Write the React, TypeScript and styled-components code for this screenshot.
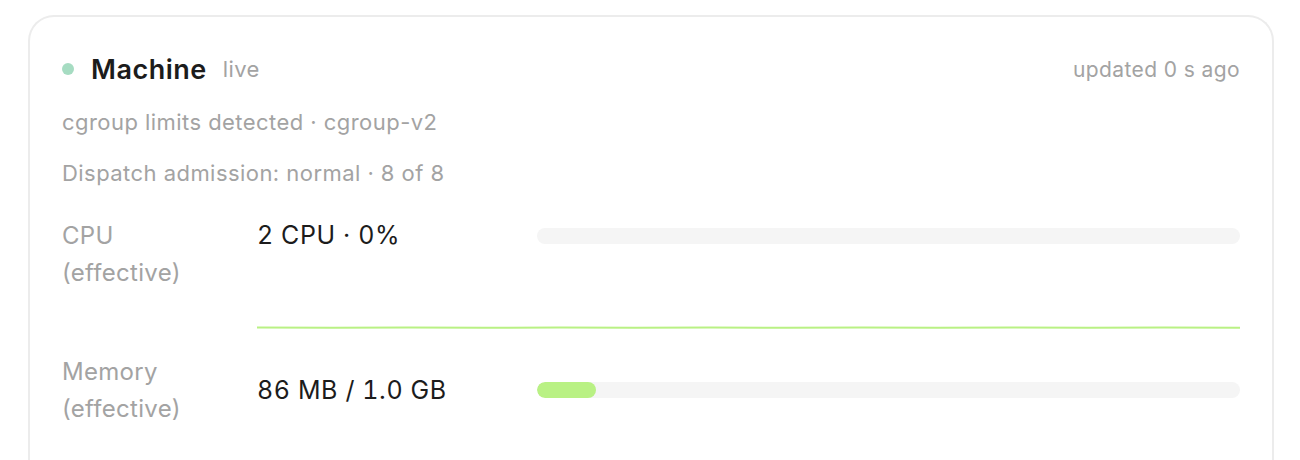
import React from "react";
import styled, { createGlobalStyle } from "styled-components";

const GlobalStyle = createGlobalStyle`
  html, body { margin: 0; padding: 0; background: #ffffff; }
  body { font-family: Inter, "Noto Sans", sans-serif; }
`;

const Page = styled.div`
  padding: 15px 26px 0 28px;
  height: 460px;
  box-sizing: border-box;
  overflow: hidden;
`;

const Card = styled.section`
  border: 2px solid #ececec;
  border-bottom: none;
  border-radius: 26px 26px 0 0;
  padding: 34px 32px 40px 32px;
  min-height: 500px;
  box-sizing: border-box;
  display: flex;
  flex-direction: column;
`;

const Header = styled.header`
  display: flex;
  align-items: center;
  justify-content: space-between;
  height: 36px;
`;

const TitleGroup = styled.div`
  display: flex;
  align-items: center;
`;

const Dot = styled.span`
  width: 12px;
  height: 12px;
  border-radius: 50%;
  background: #a6dcc2;
  margin-right: 17px;
`;

const Title = styled.h2`
  margin: 0;
  font-size: 27px;
  font-weight: 600;
  color: #1c1c1c;
  letter-spacing: 0.5px;
`;

const Muted = styled.span<{ $size?: number }>`
  font-size: ${(p) => p.$size ?? 21}px;
  letter-spacing: 0.4px;
  color: #a3a3a3;
`;

const Live = styled(Muted)`
  margin-left: 16px;
`;

const Meta = styled.p`
  margin: 0;
  font-size: 22px;
  letter-spacing: 0.45px;
  line-height: 51px;
  color: #a3a3a3;
`;

const MetaBlock = styled.div`
  margin-top: 10px;
  display: flex;
  flex-direction: column;
`;

const Metrics = styled.div`
  display: grid;
  grid-template-columns: 195px 280px 1fr;
  margin-top: 18px;
`;

const Label = styled.div`
  font-size: 24px;
  letter-spacing: 0.3px;
  line-height: 37px;
  color: #a3a3a3;
`;

const Value = styled.div<{ $center?: boolean }>`
  font-size: 25px;
  letter-spacing: 0.6px;
  font-variant-numeric: tabular-nums;
  line-height: 37px;
  color: #1c1c1c;
  align-self: ${(p) => (p.$center ? "center" : "start")};
`;

const BarCell = styled.div<{ $center?: boolean }>`
  align-self: ${(p) => (p.$center ? "center" : "start")};
  padding-top: ${(p) => (p.$center ? "0" : "11px")};
`;

const Track = styled.div`
  height: 16px;
  border-radius: 8px;
  background: #f5f5f5;
  overflow: hidden;
`;

const Fill = styled.div`
  height: 100%;
  border-radius: 8px;
  background: #b9f184;
`;

const MetricRow = styled.div`
  display: contents;
`;

const ChartCell = styled.div`
  grid-column: 2 / 4;
  margin-top: -23px;
  height: 61px;
  margin-bottom: 24px;
`;

const Spark = styled.svg`
  display: block;
  width: 100%;
  height: 100%;
`;

const points = Array.from({ length: 14 }, (_, i) => i);

export default function App() {
  const memPct = (86 / 1024) * 100;
  const w = 983;
  const h = 61;
  const poly = points
    .map((i) => `${(i / (points.length - 1)) * w},${h - 1.2 - (i % 2 === 0 ? 0.3 : 0)}`)
    .join(" ");
  return (
    <>
      <GlobalStyle />
      <Page>
        <Card>
          <Header>
            <TitleGroup>
              <Dot />
              <Title>Machine</Title>
              <Live $size={22}>live</Live>
            </TitleGroup>
            <Muted>updated 0 s ago</Muted>
          </Header>
          <MetaBlock>
            <Meta>cgroup limits detected · cgroup-v2</Meta>
            <Meta>Dispatch admission: normal · 8 of 8</Meta>
          </MetaBlock>
          <Metrics>
            <MetricRow>
              <Label>
                CPU
                <br />
                (effective)
              </Label>
              <Value>2 CPU · 0%</Value>
              <BarCell>
                <Track>
                  <Fill style={{ width: "0%" }} />
                </Track>
              </BarCell>
              <div />
              <ChartCell>
                <Spark viewBox={`0 0 ${w} ${h}`} preserveAspectRatio="none">
                  <polyline
                    points={poly}
                    fill="none"
                    stroke="#b9f184"
                    strokeWidth="2"
                  />
                </Spark>
              </ChartCell>
            </MetricRow>
            <MetricRow>
              <Label>
                Memory
                <br />
                (effective)
              </Label>
              <Value $center>86 MB / 1.0 GB</Value>
              <BarCell $center>
                <Track>
                  <Fill style={{ width: `${memPct}%` }} />
                </Track>
              </BarCell>
            </MetricRow>
          </Metrics>
        </Card>
      </Page>
    </>
  );
}
